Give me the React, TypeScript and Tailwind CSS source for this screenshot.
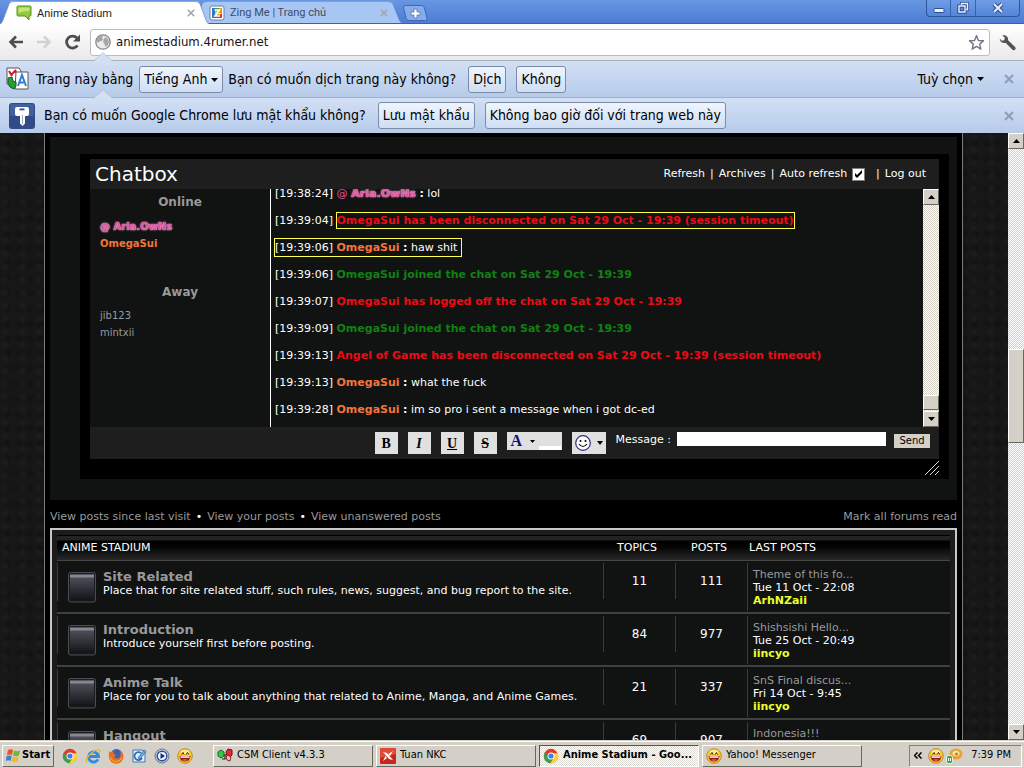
import type { ReactNode } from "react";
import clsx from "clsx";

type Message = {
  time: string;
  user?: string;
  text: string;
  tone: "say" | "join" | "leave";
  mark?: "line" | "text";
};

type Forum = {
  name: string;
  about: string;
  topics: number;
  posts: number;
  last: string;
  date: string;
  by: string;
};

const messages: Message[] = [
  { time: "19:38:24", user: "Aria.OwNs", text: "lol", tone: "say" },
  {
    time: "19:39:04",
    text: "OmegaSui has been disconnected on Sat 29 Oct - 19:39 (session timeout)",
    tone: "leave",
    mark: "text",
  },
  { time: "19:39:06", user: "OmegaSui", text: "haw shit", tone: "say", mark: "line" },
  { time: "19:39:06", text: "OmegaSui joined the chat on Sat 29 Oct - 19:39", tone: "join" },
  { time: "19:39:07", text: "OmegaSui has logged off the chat on Sat 29 Oct - 19:39", tone: "leave" },
  { time: "19:39:09", text: "OmegaSui joined the chat on Sat 29 Oct - 19:39", tone: "join" },
  {
    time: "19:39:13",
    text: "Angel of Game has been disconnected on Sat 29 Oct - 19:39 (session timeout)",
    tone: "leave",
  },
  { time: "19:39:13", user: "OmegaSui", text: "what the fuck", tone: "say" },
  { time: "19:39:28", user: "OmegaSui", text: "im so pro i sent a message when i got dc-ed", tone: "say" },
];

const forums: Forum[] = [
  {
    name: "Site Related",
    about: "Place that for site related stuff, such rules, news, suggest, and bug report to the site.",
    topics: 11,
    posts: 111,
    last: "Theme of this fo...",
    date: "Tue 11 Oct - 22:08",
    by: "ArhNZaii",
  },
  {
    name: "Introduction",
    about: "Introduce yourself first before posting.",
    topics: 84,
    posts: 977,
    last: "Shishsishi Hello...",
    date: "Tue 25 Oct - 20:49",
    by: "iincyo",
  },
  {
    name: "Anime Talk",
    about: "Place for you to talk about anything that related to Anime, Manga, and Anime Games.",
    topics: 21,
    posts: 337,
    last: "SnS Final discus...",
    date: "Fri 14 Oct - 9:45",
    by: "iincyo",
  },
  {
    name: "Hangout",
    about: "",
    topics: 69,
    posts: 907,
    last: "Indonesia!!!",
    date: "",
    by: "",
  },
];

export default function App() {
  return (
    <div className="flex h-screen flex-col overflow-hidden bg-black font-['DejaVu_Sans_Condensed','DejaVu_Sans',sans-serif] text-black">
      <TabStrip />
      <Toolbar />
      <TranslateBar />
      <PasswordBar />
      <div className="flex min-h-0 flex-1">
        <ForumPage />
        <Scrollbar before="grow-[201]" after="grow-[282]" thumb="h-[94px]" />
      </div>
      <Taskbar />
    </div>
  );
}

/* ---------- browser frame ---------- */

function TabStrip() {
  return (
    <header className="flex h-6 shrink-0 items-end bg-linear-to-b from-[#6796e2] to-[#4b7bd2] shadow-[inset_0_-1px_0_#3d61ac]">
      <Tab active title="Anime Stadium" icon={<BubbleIcon />} />
      <Tab title="Zing Me | Trang chủ" icon={<ZingIcon />} />
      <button type="button" aria-label="New tab" className="mb-[3px] h-4 w-[26px]">
        <svg viewBox="0 0 26 16" className="h-4 w-[26px]">
          <path d="M3.500.5h16q2 0 2.800 2l2.700 11q.4 2-1.500 2H7q-2 0-2.800-2L1.500 3q-.5-2.500 2-2.500z" fill="#86acea" stroke="#3f66b4" />
          <path d="M12 4h3v3h3v3h-3v3h-3v-3H9V7h3z" fill="#fff" stroke="#4468ae" strokeWidth=".7" />
        </svg>
      </button>
      <div className="mr-1 ml-auto flex h-[17px] self-start rounded-b border border-t-0 border-[#2f559f] bg-linear-to-b from-[#6f9ce6] to-[#5384d8]">
        <button type="button" aria-label="Minimize" className="flex w-6 items-center justify-center border-r border-[#3a61ac]">
          <svg viewBox="0 0 12 12" className="size-3">
            <rect x="1" y="6.500" width="10" height="4" rx="1" fill="#e8f0fc" stroke="#2f4f8c" />
          </svg>
        </button>
        <button type="button" aria-label="Restore" className="flex w-[25px] items-center justify-center border-r border-[#3a61ac]">
          <svg viewBox="0 0 12 12" className="size-3" fill="none">
            <path d="M4.500 3V1.500h6v6H9" stroke="#2f4f8c" strokeWidth="3" />
            <rect x="2" y="4" width="6" height="6" stroke="#2f4f8c" strokeWidth="3.400" />
            <path d="M4.500 3V1.500h6v6H9M2 4h6v6H2z" stroke="#e8f0fc" strokeWidth="1.400" />
          </svg>
        </button>
        <button type="button" aria-label="Close" className="flex w-[43px] items-center justify-center">
          <svg viewBox="0 0 12 12" className="size-3">
            <path d="M2 2l8 8M10 2l-8 8" stroke="#2f4f8c" strokeWidth="4" />
            <path d="M2 2l8 8M10 2l-8 8" stroke="#e8f0fc" strokeWidth="2" />
          </svg>
        </button>
      </div>
    </header>
  );
}

function Tab({ active, title, icon }: { active?: boolean; title: string; icon: ReactNode }) {
  const fill = active ? "#ffffff" : "#a8c6f4";
  const line = active ? "#6d8fc9" : "#5c84c8";
  return (
    <div className={clsx("flex", active ? "z-10 h-[23px]" : "-ml-4 mb-px h-[22px]")}>
      <svg viewBox="0 0 14 23" preserveAspectRatio="none" className="h-full w-3.5">
        <path d="M0 23Q2 22 3 19L9 3q1-3 5-3v23z" fill={fill} />
        <path d="M0 23Q2 22 3 19L9 3q1-2.500 5-2.500" fill="none" stroke={line} strokeWidth=".8" />
      </svg>
      <div
        className={clsx(
          "flex w-[181px] items-center border-t pl-0.5 font-[Roboto,sans-serif] text-[11px]",
          active ? "border-[#8fa9d6] bg-white text-[#222]" : "border-[#7fa0d8] bg-[#a8c6f4] text-[#3c4c66]",
        )}
      >
        {icon}
        <a href="#" className="mt-0.5 ml-[5px] flex-1 whitespace-nowrap">
          {title}
        </a>
        <button type="button" aria-label={`Close ${title}`} className="text-[#a4a4aa]">
          <CrossIcon className="size-2" />
        </button>
      </div>
      <svg viewBox="0 0 14 23" preserveAspectRatio="none" className="h-full w-3.5">
        <path d="M14 23q-2-1-3-4L5 3Q4 0 0 0v23z" fill={fill} />
        <path d="M14 23q-2-1-3-4L5 3Q4 .5 0 .5" fill="none" stroke={line} strokeWidth=".8" />
      </svg>
    </div>
  );
}

function Toolbar() {
  return (
    <div className="flex h-9 shrink-0 items-center bg-linear-to-b from-white to-[#e9e9e9] px-2">
      <button type="button" aria-label="Back" className="mr-3">
        <ArrowIcon className="size-4 text-[#4d4d4d]" />
      </button>
      <button type="button" aria-label="Forward" className="mr-3">
        <ArrowIcon className="size-4 rotate-180 text-[#d2d2d2]" />
      </button>
      <button type="button" aria-label="Reload" className="mr-2">
        <svg viewBox="0 0 18 18" className="size-[18px]" fill="none">
          <path d="M13.500 12.500A6 6 0 1 1 13 5" stroke="#4d4d4d" strokeWidth="2.800" />
          <path d="M16 1.500v7H9z" fill="#4d4d4d" />
        </svg>
      </button>
      <div className="flex h-[27px] flex-1 items-center rounded-[3px] border border-[#b9bcc1] bg-white px-1">
        <GlobeIcon />
        <input
          aria-label="Address"
          defaultValue="animestadium.4rumer.net"
          className="ml-[5px] min-w-0 flex-1 bg-transparent text-[13px] text-[#111] outline-none"
        />
        <button type="button" aria-label="Bookmark">
          <svg viewBox="0 0 18 18" className="size-[17px]">
            <path
              d="M9 1.800l2.100 5 5.300.4-4 3.500 1.200 5.300L9 13.200 4.400 16l1.200-5.300-4-3.500 5.300-.4z"
              fill="#fff"
              stroke="#6f7783"
              strokeWidth="1.500"
              strokeLinejoin="round"
            />
          </svg>
        </button>
      </div>
      <button type="button" aria-label="Settings" className="ml-[9px]">
        <svg viewBox="0 0 18 18" className="size-[17px]">
          <path
            d="M3.500 1.500l2.700 2.600L5.500 6.700l-2.600.4L.8 4.800a4.600 4.600 0 0 0 6.200 4.400l7 7.300a2 2 0 0 0 3-2.700L9.600 6.600A4.600 4.600 0 0 0 3.500 1.500z"
            fill="#525252"
          />
        </svg>
      </button>
    </div>
  );
}

const barButton =
  "h-[27px] rounded-[3px] border border-[#7c8ca6] bg-linear-to-b from-[#eff5fd] to-[#cfdef3] px-1 whitespace-nowrap";

function InfoBar({ className, children }: { className?: string; children: ReactNode }) {
  return (
    <div
      className={clsx(
        "relative flex shrink-0 items-center border-t border-[#a4afc0] bg-linear-to-b from-[#d3e0f4] to-[#b6cbea] pr-2.5 text-[14px] whitespace-nowrap",
        className,
      )}
    >
      <svg viewBox="0 0 20 10" className="absolute -top-[9px] left-[93px] h-2.5 w-5">
        <path d="M0 10L10 1l10 9z" fill="#d3e0f4" />
        <path d="M0 9.500L10 .7l10 8.800" fill="none" stroke="#b4bfd0" strokeWidth=".8" />
      </svg>
      {children}
    </div>
  );
}

function TranslateBar() {
  return (
    <InfoBar className="h-[37px]">
      <TranslateIcon />
      <label htmlFor="from-lang" className="mx-1.5">
        Trang này bằng
      </label>
      <div className="relative flex">
        <select id="from-lang" className={clsx(barButton, "w-[84px] appearance-none")}>
          <option>Tiếng Anh</option>
        </select>
        <Caret className="pointer-events-none absolute top-3 right-[5px]" />
      </div>
      <span className="ml-[5px]">Bạn có muốn dịch trang này không?</span>
      <button type="button" className={clsx(barButton, "ml-3")}>
        Dịch
      </button>
      <button type="button" className={clsx(barButton, "ml-2.5")}>
        Không
      </button>
      <button type="button" className="ml-auto flex items-center gap-1">
        Tuỳ chọn
        <Caret />
      </button>
      <button type="button" aria-label="Close" className="ml-5 text-[#8d9db8]">
        <CrossIcon className="size-2.5" />
      </button>
    </InfoBar>
  );
}

function PasswordBar() {
  return (
    <InfoBar className="h-9">
      <svg viewBox="0 0 26 26" className="ml-[9px] size-[26px]">
        <rect width="26" height="26" rx="3" fill="#304b86" />
        <rect x="1" y="1" width="24" height="12" rx="2" fill="#4160a0" />
        <path
          d="M8 4h10q2 0 2 2v5q0 2-2 2h-2v7.500L13.500 23 11 20.500V13H8q-2 0-2-2V6q0-2 2-2z"
          fill="#fff"
        />
        <path d="M10.500 5.500h5v1.800h-5z" fill="#304b86" />
        <path d="M13.500 12v9" stroke="#9aaace" />
      </svg>
      <span className="ml-[9px]">Bạn có muốn Google Chrome lưu mật khẩu không?</span>
      <button type="button" className={clsx(barButton, "ml-3")}>
        Lưu mật khẩu
      </button>
      <button type="button" className={clsx(barButton, "ml-2.5")}>
        Không bao giờ đối với trang web này
      </button>
      <button type="button" aria-label="Close" className="ml-auto text-[#8d9db8]">
        <CrossIcon className="size-2.5" />
      </button>
    </InfoBar>
  );
}

/* ---------- forum page ---------- */

function ForumPage() {
  return (
    <div className="min-w-0 flex-1 overflow-hidden bg-[#171717] bg-[radial-gradient(circle_at_30%_30%,#1d1d1d,transparent_5px),radial-gradient(circle_at_75%_70%,#121212,transparent_6px)] bg-size-[17px_13px,11px_15px] pr-[45px] pl-11 font-['DejaVu_Sans',sans-serif] text-[11px] text-white">
      <main className="border-x border-[#7b7b7b] bg-black px-[5px] pt-1">
        <div className="bg-[#111312] pt-[17px] pr-2 pb-[21px] pl-[30px]">
          <Chatbox />
        </div>
        <nav className="flex h-7 items-center pt-1.5 text-[#999]">
          <a href="#">View posts since last visit</a>
          <Dot />
          <a href="#">View your posts</a>
          <Dot />
          <a href="#">View unanswered posts</a>
          <a href="#" className="ml-auto">
            Mark all forums read
          </a>
        </nav>
        <ForumTable />
      </main>
    </div>
  );
}

function Dot() {
  return <span className="px-[5px] text-white">•</span>;
}

function Chatbox() {
  return (
    <section className="relative bg-black px-2.5 pt-[5px] pb-5">
      <div className="flex h-[30px] items-center bg-[#1e1e1e] pr-[13px] pl-[5px]">
        <h1 className="text-[20px]">Chatbox</h1>
        <div className="ml-auto flex items-center gap-[5px]">
          <a href="#">Refresh</a>|<a href="#">Archives</a>|
          <label htmlFor="auto">Auto refresh</label>
          <input
            id="auto"
            type="checkbox"
            defaultChecked
            className="size-[13px] appearance-none border border-[#808080] bg-white"
          />
          <svg viewBox="0 0 13 13" className="pointer-events-none -ml-[18px] size-[13px]">
            <path d="M3 5v3l2 2 5-5V2L5 7z" fill="#000" />
          </svg>
          <span className="ml-1.5">|</span>
          <a href="#">Log out</a>
        </div>
      </div>
      <div className="flex h-[238px] bg-[#111312]">
        <aside className="w-[181px] border-r border-white text-[10px] text-[#999]">
          <h2 className="pt-1 text-center text-[12px] leading-[18px] font-bold">Online</h2>
          <ul className="mt-[7px] h-[61px] pl-2.5 leading-[17px] font-bold">
            <li>
              <AriaName glow />
            </li>
            <li className="text-[#f4743b]">OmegaSui</li>
          </ul>
          <h2 className="pt-1 text-center text-[12px] leading-[18px] font-bold">Away</h2>
          <ul className="mt-1.5 pl-2.5 leading-[17px]">
            <li>jib123</li>
            <li>mintxii</li>
          </ul>
        </aside>
        <div className="flex min-w-0 flex-1 flex-col justify-end overflow-hidden pb-1 pl-1">
          {messages.map((m, i) => (
            <MessageRow key={i} m={m} />
          ))}
        </div>
        <Scrollbar before="grow-[193]" after="grow-[1]" thumb="h-[15px]" />
      </div>
      <form className="flex h-8 items-start justify-end bg-[#1e1e1e] pt-[5px] pr-[9px]" onSubmit={(e) => e.preventDefault()}>
        <div className="mr-2.5 flex items-start gap-2.5 font-['Liberation_Serif',serif] text-[14px] font-bold text-black">
          <FormatButton label="Bold">B</FormatButton>
          <FormatButton label="Italic">
            <i>I</i>
          </FormatButton>
          <FormatButton label="Underline">
            <u>U</u>
          </FormatButton>
          <FormatButton label="Strike">
            <s>S</s>
          </FormatButton>
          <button type="button" aria-label="Colour" className="flex h-[18px] w-[55px] items-center bg-[#e0e0e0] pl-1 text-[16px] leading-none text-[#0b1279]">
            A
            <svg viewBox="0 0 5 3" className="ml-2 h-[3px] w-[5px]">
              <path d="M0 0h5L2.500 3z" fill="#000" />
            </svg>
            <span className="ml-1 h-1 w-[22px] self-end bg-white" />
          </button>
          <button type="button" aria-label="Smilies" className="flex h-[22px] w-[34px] items-center justify-center gap-1.5 bg-[#e0e0e0]">
            <svg viewBox="0 0 16 16" className="size-4">
              <circle cx="8" cy="8" r="7.300" fill="#fff" stroke="#2a2f86" strokeWidth="1.200" />
              <circle cx="5.500" cy="6" r="1" />
              <circle cx="10.500" cy="6" r="1" />
              <path d="M4 9q4 5 8 0" fill="none" stroke="#000" strokeWidth="1.200" />
            </svg>
            <svg viewBox="0 0 6 4" className="h-1 w-1.5">
              <path d="M0 0h6L3 4z" fill="#000" />
            </svg>
          </button>
        </div>
        <label htmlFor="message" className="mr-1.5 leading-4">
          Message :
        </label>
        <input id="message" className="mr-2 h-3.5 w-[209px] bg-white px-0.5 text-[10px] text-black" />
        <button type="submit" className="mt-0.5 h-3.5 w-9 bg-[#d4d0c8] text-center text-[10px] leading-[14px] text-black">
          Send
        </button>
      </form>
      <svg viewBox="0 0 14 14" className="absolute right-2.5 bottom-1 size-3.5">
        <path d="M0 14L14 0M5 14l9-9M10 14l4-4" stroke="#ddd" strokeWidth="1" />
      </svg>
    </section>
  );
}

function FormatButton({ label, children }: { label: string; children: ReactNode }) {
  return (
    <button type="button" aria-label={label} className="h-[22px] w-[23px] bg-[#e0e0e0]">
      {children}
    </button>
  );
}

function AriaName({ glow }: { glow?: boolean }) {
  return (
    <span className="font-bold text-[#e0559f]">
      <span className={clsx(glow ? "[text-shadow:0_0_1px_#ffb3da,0_0_2px_#ffb3da]" : "font-normal")}>@</span>{" "}
      <span className="[text-shadow:0_0_1px_#ffb3da,0_0_2px_#ffb3da]">Aria.OwNs</span>
    </span>
  );
}

function MessageRow({ m }: { m: Message }) {
  return (
    <p className="h-[27px] shrink-0 leading-[27px] whitespace-nowrap">
      <span className={clsx(m.mark === "line" && "py-0.5 pr-1 ring-1 ring-[#ffff4d]")}>
        [{m.time}]{" "}
        {m.user ? (
          <>
            {m.user === "Aria.OwNs" ? <AriaName /> : <b className="text-[#f4743b]">{m.user}</b>} <b>:</b> {m.text}
          </>
        ) : (
          <b
            className={clsx(
              m.tone === "join" ? "text-[#128012]" : "text-[#ee0a14]",
              m.mark === "text" && "py-px ring-1 ring-[#ffff4d]",
            )}
          >
            {m.text}
          </b>
        )}
      </span>
    </p>
  );
}

function ForumTable() {
  return (
    <div className="border-2 border-[#c8c8c8] bg-[#1c1c1c] p-[5px]">
      <table className="w-full table-fixed border-separate border-spacing-0 bg-[#111312]">
        <thead>
          <tr className="h-[26px] bg-[linear-gradient(#000_0_1px,#242424_1px,#222_5px,#000_6px,#040404_12px,#292929_25px)] text-left leading-3 *:border-b *:border-[#454545] *:font-normal">
            <th className="pl-[5px]">ANIME STADIUM</th>
            <th className="w-[72px] pr-1 text-center">TOPICS</th>
            <th className="w-[72px] pr-1 text-center">POSTS</th>
            <th className="w-[203px] pl-0.5">LAST POSTS</th>
          </tr>
        </thead>
        <tbody>
          {forums.map((f) => (
            <tr key={f.name} className="h-[53px] align-top *:border-b-2 *:border-[#3f4140]">
              <td className="pt-0.5">
                <div className="flex h-[38px] border-l border-[#3a3a3a] pt-[7px] pl-2.5">
                  <ForumIcon />
                  <div className="-mt-px ml-[7px] whitespace-nowrap">
                    <a href="#" className="block text-[13px] leading-[15px] font-bold text-[#999]">
                      {f.name}
                    </a>
                    <p className="leading-[14px]">{f.about}</p>
                  </div>
                </div>
              </td>
              <td className="pt-0.5">
                <div className="h-9 border-l border-[#3a3a3a] text-center text-[12px] leading-9">{f.topics}</div>
              </td>
              <td className="pt-0.5">
                <div className="h-9 border-l border-[#3a3a3a] text-center text-[12px] leading-9">{f.posts}</div>
              </td>
              <td className="pt-0.5">
                <div className="h-12 border-l border-[#3a3a3a] pt-[5px] pl-[5px] leading-[13px]">
                  <a href="#" className="block text-[#999]">
                    {f.last}
                  </a>
                  <p>{f.date}</p>
                  <a href="#" className="block font-bold text-[#eaff2b]">
                    {f.by}
                  </a>
                </div>
              </td>
            </tr>
          ))}
        </tbody>
      </table>
    </div>
  );
}

function ForumIcon() {
  return (
    <svg viewBox="0 0 28 31" className="mt-0.5 h-[31px] w-7 shrink-0">
      <defs>
        <linearGradient id="slab" x1="0" y1="0" x2="0" y2="1">
          <stop offset="0" stopColor="#555762" />
          <stop offset="1" stopColor="#121316" />
        </linearGradient>
      </defs>
      <rect x=".5" y=".5" width="27" height="29.500" rx="2" fill="#1b1c1f" stroke="#4c4d52" />
      <rect x="2" y="2" width="24" height="26.500" fill="url(#slab)" />
      <rect x="2" y="3" width="24" height="2.500" fill="#85868f" />
    </svg>
  );
}

/* ---------- classic scrollbar and taskbar ---------- */

const raised = "border border-t-white border-l-white border-r-[#6a675f] border-b-[#6a675f] bg-[#d4d0c8]";

function Scrollbar({ before, after, thumb }: { before: string; after: string; thumb: string }) {
  return (
    <div className="flex w-4 shrink-0 flex-col bg-[repeating-conic-gradient(#fff_0_25%,#d4d0c8_0_50%)] bg-size-[2px_2px]">
      <button type="button" aria-label="Scroll up" className={clsx(raised, "flex h-4 items-center justify-center")}>
        <svg viewBox="0 0 7 4" className="h-1 w-[7px]">
          <path d="M0 4h7L3.500 0z" />
        </svg>
      </button>
      <div className={before} />
      <div className={clsx(raised, thumb)} />
      <div className={after} />
      <button type="button" aria-label="Scroll down" className={clsx(raised, "flex h-4 items-center justify-center")}>
        <svg viewBox="0 0 7 4" className="h-1 w-[7px]">
          <path d="M0 0h7L3.500 4z" />
        </svg>
      </button>
    </div>
  );
}

function Taskbar() {
  return (
    <footer className="flex h-7 shrink-0 items-center border-t border-[#d4d0c8] bg-[#d4d0c8] px-0.5 pt-0.5 text-[11px] shadow-[inset_0_1px_0_#fff]">
      <button type="button" className={clsx(raised, "flex h-[22px] w-[52px] items-center gap-px pl-0.5 font-bold")}>
        <FlagIcon />
        Start
      </button>
      <div className="ml-2 flex w-[151px] items-center gap-[7px]">
        <ChromeIcon />
        <ExplorerIcon />
        <FoxIcon />
        <MailIcon />
        <PlayerIcon />
        <SmileyIcon />
      </div>
      <div className="flex gap-[3px]">
        <Task title="CSM Client v4.3.3" icon={<CsmIcon />} />
        <Task title="Tuan NKC" icon={<RedIcon />} />
        <Task title="Anime Stadium - Goo..." icon={<ChromeIcon />} active />
        <Task title="Yahoo! Messenger" icon={<SmileyIcon />} />
      </div>
      <div className="ml-auto flex h-[22px] w-[113px] items-center border border-t-[#808080] border-r-white border-b-white border-l-[#808080] pr-2.5 pl-1">
        <svg viewBox="0 0 8 7" className="mr-1.5 h-[7px] w-2" fill="none" stroke="#000" strokeWidth="1.500">
          <path d="M3.500.5l-3 3 3 3M7.500.5l-3 3 3 3" />
        </svg>
        <SmileyIcon />
        <svg viewBox="0 0 17 16" className="ml-0.5 h-4 w-[17px] shrink-0">
          <ellipse cx="10" cy="6" rx="6.500" ry="5.500" fill="#e9a23a" />
          <ellipse cx="10" cy="5.500" rx="3.500" ry="2.800" fill="#fbe3a4" />
          <circle cx="10.500" cy="6" r="1.500" fill="#c9781a" />
          <rect x=".5" y="7.500" width="6" height="8" rx="2" fill="#3fa83c" stroke="#e8f5e4" />
          <path d="M2.500 10v3M4.500 10v3" stroke="#fff" />
        </svg>
        <time className="ml-auto whitespace-nowrap">7:39 PM</time>
      </div>
    </footer>
  );
}

function Task({ title, icon, active }: { title: string; icon: ReactNode; active?: boolean }) {
  return (
    <button
      type="button"
      className={clsx(
        "flex h-[22px] w-40 items-center gap-1 pl-[3px] whitespace-nowrap",
        active
          ? "border border-t-[#555] border-r-white border-b-white border-l-[#555] bg-[repeating-conic-gradient(#fff_0_25%,#dedbd5_0_50%)] bg-size-[2px_2px] font-bold"
          : raised,
      )}
    >
      {icon}
      {title}
    </button>
  );
}

/* ---------- icons ---------- */

function Caret({ className }: { className?: string }) {
  return (
    <svg viewBox="0 0 7 4" className={clsx("h-1 w-[7px]", className)}>
      <path d="M0 0h7L3.500 4z" />
    </svg>
  );
}

function CrossIcon({ className }: { className?: string }) {
  return (
    <svg viewBox="0 0 10 10" className={className}>
      <path d="M1 1l8 8M9 1L1 9" stroke="currentColor" strokeWidth="2" />
    </svg>
  );
}

function ArrowIcon({ className }: { className?: string }) {
  return (
    <svg viewBox="0 0 16 16" className={className} fill="none" stroke="currentColor" strokeWidth="2.600">
      <path d="M8 2.500L2.500 8 8 13.500M2.500 8H15" />
    </svg>
  );
}

function GlobeIcon() {
  return (
    <svg viewBox="0 0 16 16" className="size-4">
      <circle cx="8" cy="8" r="7.200" fill="#ececec" stroke="#858585" strokeWidth="1.300" />
      <path d="M3 3.500q3-2.500 5-1.500l-1 2 1.500 1.500-2 1.500-2 .5L3 9 1.500 7zM10 3l3 2 1 3-1 3-2.500 2-1-3-1.500-2 1-2.500z" fill="#a6a6a6" />
    </svg>
  );
}

function BubbleIcon() {
  return (
    <svg viewBox="0 0 16 16" className="size-4">
      <path d="M2 1h12q1 0 1 1v8q0 1-1 1h-1v4l-4-4H2q-1 0-1-1V2q0-1 1-1z" fill="#93c83a" stroke="#5d8f1e" />
      <path d="M2.500 2.500h11V6Q7 6 2.500 8z" fill="#c3e57c" />
    </svg>
  );
}

function ZingIcon() {
  return (
    <svg viewBox="0 0 16 16" className="size-4">
      <rect x="1" y="1" width="14" height="14" rx="2" fill="#fff" stroke="#6b7f9a" />
      <path d="M3 3h3v10H3z" fill="#2f77c9" />
      <path d="M6 3h4v3H6z" fill="#3fa83c" />
      <path d="M10 3h3v5h-3z" fill="#ef8b1e" />
      <path d="M6 6h4v4H6z" fill="#f0c21c" />
      <path d="M6 10h4l3-2v5H6z" fill="#d8362f" />
      <path d="M5.500 5h5L6 11h5" fill="none" stroke="#fff" strokeWidth="1.600" />
    </svg>
  );
}

function TranslateIcon() {
  return (
    <svg viewBox="0 0 24 24" className="ml-1.5 size-6">
      <path d="M1 1h12l2 3v13H1z" fill="#fff" stroke="#555" />
      <path d="M3 4l3 5M5 8l5-5M9 4l3 4" stroke="#d4123a" strokeWidth="2" />
      <path d="M10 5h12v17H9z" fill="#fff" stroke="#555" />
      <path d="M12 19l4-11 4 11M13.500 15.500h5" fill="none" stroke="#2e7fd8" strokeWidth="2" />
      <path d="M2 11l4-1 1 4 3 1v4l-2 3q-5-1-6-6z" fill="#2c9b35" stroke="#0f5c1b" />
    </svg>
  );
}

function FlagIcon() {
  return (
    <svg viewBox="0 0 16 16" className="size-4 shrink-0">
      <path d="M3 2q3-1.500 5 0L7 7Q5 6 2 7z" fill="#e8542b" />
      <path d="M9 2.500q3 1.500 6 0l-1 5q-3 1.500-6 0z" fill="#6fb93a" />
      <path d="M1.700 8q3-1 5 0l-1 5q-2-1.500-5 0z" fill="#3f7fd6" />
      <path d="M7.700 8.500q3 1.500 6 0l-1 5q-3 1.500-6 0z" fill="#f3b92a" />
    </svg>
  );
}

function ChromeIcon() {
  return (
    <svg viewBox="0 0 16 16" className="size-4 shrink-0">
      <circle cx="8" cy="8" r="7.200" fill="#e23b2e" />
      <path d="M1.760 4.400A7.200 7.200 0 0 0 7.300 15.170L10.900 9.700 8 8 5.200 9.700z" fill="#35a24c" />
      <path d="M14.800 5.300A7.200 7.200 0 0 1 7.300 15.170L11 9.500 10.500 5.300z" fill="#fbd23c" />
      <circle cx="8" cy="8" r="3.500" fill="#fff" />
      <circle cx="8" cy="8" r="2.600" fill="#3f7fe0" />
    </svg>
  );
}

function ExplorerIcon() {
  return (
    <svg viewBox="0 0 16 16" className="size-4" fill="none">
      <path d="M13 11.300A5 5 0 1 1 13.500 8.500H4.500" stroke="#2e8be0" strokeWidth="2.800" />
      <path d="M2 14.500Q-.5 12 5 6.500t9.500-4.500q1 1-.5 3" stroke="#e9b43a" strokeWidth="1.400" />
    </svg>
  );
}

function FoxIcon() {
  return (
    <svg viewBox="0 0 16 16" className="size-4">
      <circle cx="8.500" cy="7" r="6" fill="#3c62b4" />
      <path d="M1 3l2 1.500L6 3 5.500 5.500 8 7l-2 2q2 2.500 5 1 2.500-2 1.500-6L11 2q4.500 1.500 4.500 6.500a7.300 7.300 0 0 1-14.600 0Q.7 5 1 3z" fill="#e8701c" />
      <path d="M2.500 9q1 4.500 6 4.500 4 0 5.500-4" fill="none" stroke="#f8b53a" strokeWidth="1" />
    </svg>
  );
}

function MailIcon() {
  return (
    <svg viewBox="0 0 16 16" className="size-4">
      <path d="M2 2h9l3 2v10H2z" fill="#e6f0fb" stroke="#3c76b8" />
      <path d="M10 5a4 4 0 1 0 1 5" fill="none" stroke="#2c6fb4" strokeWidth="1.800" />
      <path d="M7 10l6-8 2 1.500L9 11z" fill="#6fb1ea" stroke="#2a5f9c" strokeWidth=".8" />
    </svg>
  );
}

function PlayerIcon() {
  return (
    <svg viewBox="0 0 16 16" className="size-4">
      <circle cx="8" cy="8" r="7" fill="#c4cfdf" stroke="#6a7687" />
      <circle cx="8" cy="8" r="4.800" fill="#f4f8fd" stroke="#2c4f9c" strokeWidth="1.400" />
      <path d="M6.500 5l4.500 3-4.500 3z" fill="#16306f" />
    </svg>
  );
}

function SmileyIcon() {
  return (
    <svg viewBox="0 0 16 16" className="size-4 shrink-0">
      <circle cx="8" cy="8" r="7.300" fill="#fbc82a" stroke="#b57a14" strokeWidth=".8" />
      <ellipse cx="8" cy="4" rx="4.500" ry="2.200" fill="#fdea8c" />
      <path d="M4.500 6.500l1.500-2 1 2M9 6.500l1.500-2 1 2" fill="none" stroke="#3c2606" strokeWidth="1" />
      <path d="M2.500 8h11q-.5 5.500-5.500 5.500T2.500 8z" fill="#8e1a16" />
      <path d="M3.500 8.300h9v1.500h-9z" fill="#fff" />
      <path d="M5 12q3-2 6 0-3 2-6 0z" fill="#e2574c" />
    </svg>
  );
}

function CsmIcon() {
  return (
    <svg viewBox="0 0 16 16" className="size-4">
      <path d="M1 4l3-2 3 2v4L4 10 1 8z" fill="#33c94a" stroke="#0e6f1e" />
      <path d="M5 11h3V6" fill="none" stroke="#222" strokeWidth="1.200" />
      <path d="M9 4l2-3 4 1v5l-2 2-3-1z" fill="#e22a2a" stroke="#6f0d0d" />
      <path d="M9 9l2-2 3 2-1 4-3-1z" fill="#f4b9b0" stroke="#6f0d0d" strokeWidth=".8" />
    </svg>
  );
}

function RedIcon() {
  return (
    <svg viewBox="0 0 16 16" className="size-4">
      <rect width="16" height="16" rx="1" fill="#c8281c" />
      <path d="M0 0h16v6L0 10z" fill="#e04a38" />
      <path d="M3 4l4 1 6 7-4-1zM13 3l-3 5-1.500-2zM3 13l2.500-5L7 10z" fill="#fff" />
    </svg>
  );
}
